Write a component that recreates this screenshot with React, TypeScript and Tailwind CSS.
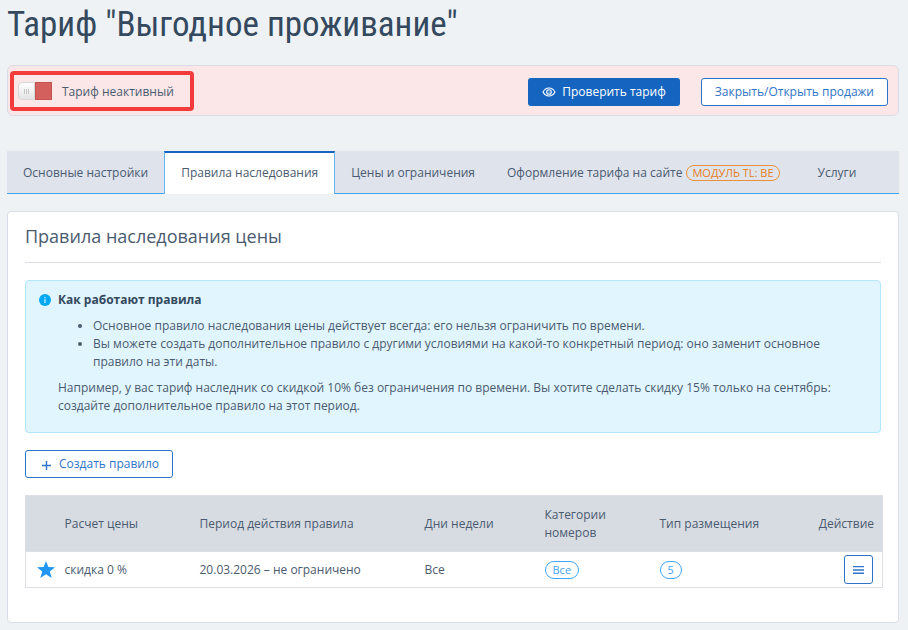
import { useState } from 'react';

type TabId = 'main' | 'inheritance' | 'prices' | 'design' | 'services';

const tabs: { id: TabId; label: string; badge?: string }[] = [
  { id: 'main', label: 'Основные настройки' },
  { id: 'inheritance', label: 'Правила наследования' },
  { id: 'prices', label: 'Цены и ограничения' },
  { id: 'design', label: 'Оформление тарифа на сайте', badge: 'МОДУЛЬ TL: BE' },
  { id: 'services', label: 'Услуги' },
];

const rules = [
  { id: 1, price: 'скидка 0 %', period: '20.03.2026 – не ограничено', days: 'Все', rooms: 'Все', placements: '5' },
];

function EyeIcon() {
  return (
    <svg viewBox="0 0 14 12" className="w-[14px] h-3 shrink-0 mt-px" fill="none" stroke="currentColor" strokeWidth="1.1">
      <path d="M1 6C2.4 3.4 4.5 2 7 2s4.600 1.400 6 4c-1.400 2.600-3.500 4-6 4S2.400 8.600 1 6z" />
      <circle cx="7" cy="6" r="2.300" />
      <circle cx="7" cy="6" r="0.600" fill="currentColor" stroke="none" />
    </svg>
  );
}

function InfoIcon() {
  return (
    <svg viewBox="0 0 12 12" className="w-3 h-3 shrink-0">
      <circle cx="6" cy="6" r="6" fill="#03a9f4" />
      <rect x="5.400" y="5.200" width="1.200" height="3.800" fill="#e1f5fe" />
      <rect x="5.400" y="3" width="1.200" height="1.200" fill="#e1f5fe" />
    </svg>
  );
}

function PlusIcon() {
  return (
    <svg viewBox="0 0 9 9" className="w-[9px] h-[9px] shrink-0 mt-0.5" stroke="currentColor" strokeWidth="1.400">
      <path d="M4.500 0v9M0 4.500h9" />
    </svg>
  );
}

function StarIcon() {
  return (
    <svg viewBox="0 0 18 17" className="w-[18px] h-[17px]" fill="#2196f3">
      <path d="M9 0l2.400 5.900 6.600.4-5.200 4.100 1.900 6.600L9 13.300 3.300 17l1.900-6.600L0 6.300l6.600-.4z" />
    </svg>
  );
}

function MenuIcon() {
  return (
    <svg viewBox="0 0 11 8" className="w-[11px] h-2" fill="currentColor">
      <path d="M0 0h11v1.300H0zM0 3.200h11v1.500H0zM0 6.600h11v1.300H0z" />
    </svg>
  );
}

function StatusBar() {
  const [active, setActive] = useState(false);

  return (
    <div className="flex items-center justify-between rounded-md border border-[#d9dbe5] bg-[#fbe7e7] pt-[5px] pb-1 pl-0.5 pr-[10px]">
      <label className="flex h-10 items-center rounded border-4 border-[#f33b3b] pl-1 pr-4 cursor-pointer">
        <input
          type="checkbox"
          className="sr-only"
          checked={active}
          onChange={(e) => setActive(e.target.checked)}
        />
        <span className={`flex h-[18px] w-[34px] ${active ? 'flex-row-reverse' : ''}`}>
          <span className="flex w-[17px] items-center justify-center gap-px rounded-l-sm border border-[#d8d8d8] bg-linear-to-b from-white to-[#e4e4e4]">
            <span className="h-[5px] w-px bg-[#c4c4c4]" />
            <span className="h-[5px] w-px bg-[#c4c4c4]" />
            <span className="h-[5px] w-px bg-[#c4c4c4]" />
          </span>
          <span className="w-[17px] border border-[#c25450] bg-[#d4605d]" />
        </span>
        <span className="ml-[10px] pt-px">Тариф неактивный</span>
      </label>
      <div className="flex gap-[21px] pt-px">
        <button className="flex h-7 items-center gap-1.5 rounded-[3px] bg-[#1565c0] px-[14px] text-white">
          <EyeIcon />
          Проверить тариф
        </button>
        <button className="h-7 rounded-[3px] border border-[#2f75c7] bg-white px-[13px] text-[#2f75c7]">
          Закрыть/Открыть продажи
        </button>
      </div>
    </div>
  );
}

function Tabs() {
  const [current, setCurrent] = useState<TabId>('inheritance');

  return (
    <nav className="flex h-[43px] bg-[#dfe3ec]">
      {tabs.map((tab) => (
        <button
          key={tab.id}
          onClick={() => setCurrent(tab.id)}
          className={`flex items-center whitespace-nowrap px-4
            ${current === tab.id
              ? 'border-x border-t-2 border-x-[#64b5f6] border-t-[#1565c0] bg-white pb-0.5'
              : 'border-b border-[#42a5f5] pt-0.5'}
          `}
        >
          {tab.label}
          {tab.badge && (
            <span className="ml-1 mr-1.5 rounded-full border border-[#e8913c] px-[5px] text-[11px] leading-[14px] text-[#e67e22]">
              {tab.badge}
            </span>
          )}
        </button>
      ))}
      <div className="flex-1 border-b border-[#42a5f5]" />
    </nav>
  );
}

function HowItWorks() {
  return (
    <div className="rounded border border-[#b3e5fc] bg-[#e1f5fe] pt-[10px] pb-[17px] pl-8 pr-6">
      <div className="-ml-[19px] flex items-center gap-[7px]">
        <InfoIcon />
        <strong className="font-bold text-[#34495e]">Как работают правила</strong>
      </div>
      <ul className="mt-2 list-disc pl-[35px]">
        <li>Основное правило наследования цены действует всегда: его нельзя ограничить по времени.</li>
        <li>
          Вы можете создать дополнительное правило с другими условиями на какой-то конкретный период: оно заменит
          основное правило на эти даты.
        </li>
      </ul>
      <p className="mt-2">
        Например, у вас тариф наследник со скидкой 10% без ограничения по времени. Вы хотите сделать скидку 15% только
        на сентябрь: создайте дополнительное правило на этот период.
      </p>
    </div>
  );
}

function RulesTable() {
  return (
    <div className="-mr-0.5 mt-[17px]">
      <table className="w-full table-fixed border-collapse border border-[#dcdfe6] text-left">
        <thead className="bg-[#d7dbe2]">
          <tr className="h-14">
            <th className="w-[31px]" />
            <th className="w-[135px] px-2 font-normal">Расчет цены</th>
            <th className="w-[225px] px-2 font-normal">Период действия правила</th>
            <th className="w-[120px] px-2 font-normal">Дни недели</th>
            <th className="w-[115px] px-2 font-normal">Категории номеров</th>
            <th className="px-2 font-normal">Тип размещения</th>
            <th className="w-[90px] px-2 text-right font-normal">Действие</th>
          </tr>
        </thead>
        <tbody>
          {rules.map((rule) => (
            <tr key={rule.id} className="h-9 border-t border-[#dcdfe6]">
              <td className="pl-[11px]"><StarIcon /></td>
              <td className="px-2">{rule.price}</td>
              <td className="px-2">{rule.period}</td>
              <td className="px-2">{rule.days}</td>
              <td className="px-2">
                <span className="inline-block rounded-full border border-[#42a5f5] px-[7px] text-[11px] leading-4 text-[#42a5f5]">
                  {rule.rooms}
                </span>
              </td>
              <td className="px-2">
                <span className="inline-block rounded-full border border-[#42a5f5] px-[7px] text-[11px] leading-4 text-[#42a5f5]">
                  {rule.placements}
                </span>
              </td>
              <td className="pr-[9px]">
                <button
                  aria-label="Действие"
                  className="ml-auto flex h-[29px] w-[29px] items-center justify-center rounded-[3px] border border-[#2f75c7] text-[#2f75c7]"
                >
                  <MenuIcon />
                </button>
              </td>
            </tr>
          ))}
        </tbody>
      </table>
    </div>
  );
}

export default function App() {
  return (
    <div className="min-h-screen bg-[#eef2f5] pt-1 pb-[7px] pl-[7px] pr-[9px] font-['Open_Sans','Noto_Sans',sans-serif] text-[12px] leading-[18px] text-[#4a5b70]">
      <h1 className="mb-[19px] font-['Roboto_Condensed','Liberation_Sans_Narrow',sans-serif] text-[35px] leading-[42px] text-[#34495e]">
        Тариф "Выгодное проживание"
      </h1>
      <StatusBar />
      <div className="mt-[35px]">
        <Tabs />
      </div>
      <section className="mt-[17px] rounded border border-[#d9dde6] bg-white px-[17px] pb-[34px]">
        <h2 className="mb-[17px] border-b border-[#d9dbe0] pt-3 pb-[14px] text-[18px] leading-6">
          Правила наследования цены
        </h2>
        <HowItWorks />
        <button className="mt-[17px] flex h-7 items-center gap-2 rounded-[3px] border border-[#2f75c7] pl-4 pr-[13px] text-[#2f75c7]">
          <PlusIcon />
          Создать правило
        </button>
        <RulesTable />
      </section>
    </div>
  );
}
